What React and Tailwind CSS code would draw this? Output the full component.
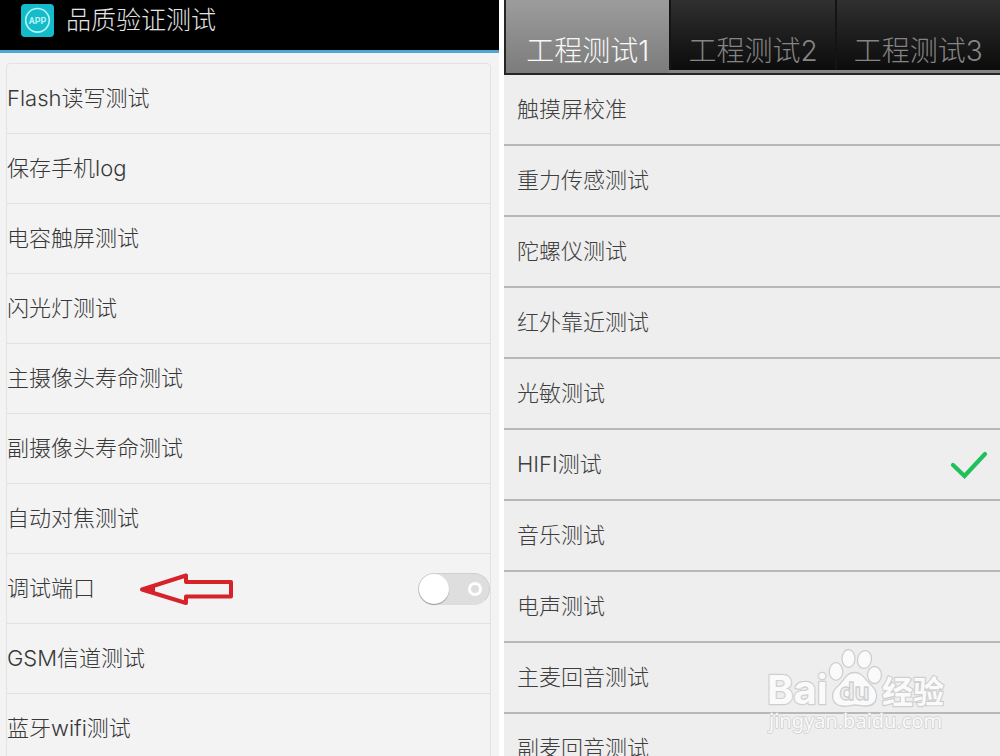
import React from 'react';

const QUALITY_TESTS = [
  'Flash读写测试',
  '保存手机log',
  '电容触屏测试',
  '闪光灯测试',
  '主摄像头寿命测试',
  '副摄像头寿命测试',
  '自动对焦测试',
  '调试端口',
  'GSM信道测试',
  '蓝牙wifi测试',
];

const TABS = ['工程测试1', '工程测试2', '工程测试3'];

const ENGINEERING_TESTS = [
  '触摸屏校准',
  '重力传感测试',
  '陀螺仪测试',
  '红外靠近测试',
  '光敏测试',
  'HIFI测试',
  '音乐测试',
  '电声测试',
  '主麦回音测试',
  '副麦回音测试',
];

function AppIcon() {
  return (
    <svg viewBox="0 0 33 33" className="size-[33px] shrink-0" aria-hidden="true">
      <rect width="33" height="33" rx="4" fill="#14bccb" />
      <circle cx="16.5" cy="16.3" r="11.8" fill="none" stroke="#b9f3f5" strokeWidth="1.6" />
      <text
        x="16.5"
        y="20"
        textAnchor="middle"
        fontSize="9"
        fontWeight="700"
        fill="#b9f3f5"
        className="font-['Roboto',sans-serif]"
      >
        APP
      </text>
    </svg>
  );
}

function Arrow() {
  return (
    <svg viewBox="0 0 96 34" className="ml-11 h-[34px] w-24 shrink-0" aria-hidden="true">
      <path
        d="M3 17.5 L47 3.5 V10 H92 V24.5 H47 V31 Z"
        fill="none"
        stroke="#d6232a"
        strokeWidth="4"
        strokeLinejoin="round"
      />
      <path d="M3 17.5 L16 13 V21.5 Z" fill="#d6232a" />
    </svg>
  );
}

function PortSwitch() {
  return (
    <span className="relative ml-auto h-8 w-[72px] shrink-0">
      <input
        id="debug-port"
        type="checkbox"
        role="switch"
        className="block h-8 w-[72px] cursor-pointer appearance-none rounded-full border border-[#d0d0d0] border-b-[#dddddd] bg-[#dedede]"
      />
      <span className="pointer-events-none absolute top-px left-px size-[30px] rounded-full bg-white shadow-[0_1px_1px_#999]" />
      <span className="pointer-events-none absolute top-[9px] right-2 size-[14px] rounded-full border-[3px] border-white" />
    </span>
  );
}

function Watermark() {
  return (
    <div className="pointer-events-none absolute right-[52px] bottom-[20px]">
      <svg viewBox="0 0 184 90" className="h-[90px] w-[184px]" aria-label="Baidu 经验">
        <g fill="#fafafa" stroke="#cfcfcf" strokeWidth="1.3" strokeLinejoin="round">
          <text x="3" y="58" fontSize="40" fontWeight="700" paintOrder="stroke" strokeWidth="2.4">
            Bai
          </text>
          <ellipse cx="72" cy="25.5" rx="6.8" ry="8.8" />
          <ellipse cx="84.500" cy="12.500" rx="6.500" ry="9" />
          <ellipse cx="100.500" cy="13.500" rx="7" ry="9" transform="rotate(10 100.500 13.500)" />
          <ellipse cx="110.500" cy="29" rx="7" ry="8.500" />
          <path d="M90.500 26.500 C99 26.500 101 34 107 39 C116 47 114 60 102 60 C97 60 94 59 90.500 59 C87 59 84 61 78 60 C67 59 66 47 73 41 C80 35 82 26.500 90.500 26.500 Z" />
          <text x="90.500" y="54" textAnchor="middle" fontSize="24" fontWeight="700" fill="#f0f0f0">
            du
          </text>
          <text
            x="118"
            y="57"
            fontSize="31"
            fontWeight="700"
            paintOrder="stroke"
            strokeWidth="2.4"
            className="font-['Noto_Sans_CJK_SC',sans-serif]"
          >
            经验
          </text>
          <text
            x="5"
            y="82"
            fontSize="20"
            fontWeight="400"
            paintOrder="stroke"
            strokeWidth="1.6"
            className="font-['Noto_Sans','Noto_Sans_CJK_SC',sans-serif]"
          >
            jingyan.baidu.com
          </text>
        </g>
      </svg>
    </div>
  );
}

function QualityPanel() {
  return (
    <section className="min-w-0 bg-[#f3f3f3]">
      <header className="h-[53px] border-b-[3px] border-[#49a8cf] bg-black pl-[21px]">
        <div className="flex h-10 items-center gap-3">
          <AppIcon />
          <h1 className="text-[25px] leading-10 font-light text-[#e4e4e4]">品质验证测试</h1>
        </div>
      </header>
      <ul className="mt-[10px] mr-2 ml-[6px] rounded-t-[4px] border border-[#e2e2e2]">
        {QUALITY_TESTS.map((name) => (
          <li key={name} className="flex h-[70px] items-center border-b border-[#e2e2e2] text-[22px] text-[#383838]">
            {name === '调试端口' ? (
              <>
                <label htmlFor="debug-port">{name}</label>
                <Arrow />
                <PortSwitch />
              </>
            ) : (
              <button type="button" className="h-full w-full text-left">
                {name}
              </button>
            )}
          </li>
        ))}
      </ul>
    </section>
  );
}

function EngineeringPanel() {
  return (
    <section className="relative min-w-0 bg-[#eeeeee]">
      <div role="tablist" className="grid h-[75px] grid-cols-3 border-b-2 border-[#262626] bg-[#858585]">
        {TABS.map((name, i) => (
          <button
            key={name}
            type="button"
            role="tab"
            aria-selected={i === 0}
            className={
              i === 0
                ? 'flex h-[73px] justify-center border-l-2 border-[#262626] bg-linear-to-b from-[#9c9c9c] to-[#7c7c7c] pt-7 text-[28px] leading-[46px] whitespace-nowrap text-[#f8f8f8]'
                : 'flex h-[70px] justify-center overflow-hidden border-l-2 border-[#141414] bg-linear-to-b from-[#303030] to-[#0c0c0c] pt-7 text-[28px] leading-[46px] whitespace-nowrap text-[#858585]'
            }
          >
            {name}
          </button>
        ))}
      </div>
      <ul>
        {ENGINEERING_TESTS.map((name) => (
          <li key={name} className="h-[71px] border-b-2 border-[#b8b8b8]">
            <button
              type="button"
              className="flex h-full w-full items-center justify-between pr-3 pl-[13px] text-left text-[22px] text-[#3e3e3e]"
            >
              {name}
              {name === 'HIFI测试' && (
                <svg viewBox="0 0 38 28" className="h-7 w-[38px]" aria-label="通过">
                  <path d="M3 14 L14.500 25 L35 3" fill="none" stroke="#1fc15b" strokeWidth="4.200" strokeLinecap="round" />
                </svg>
              )}
            </button>
          </li>
        ))}
      </ul>
    </section>
  );
}

export default function App() {
  return (
    <main className="relative grid h-screen grid-cols-[499fr_496fr] gap-[5px] overflow-hidden bg-white font-['Inter','Noto_Sans_CJK_SC',sans-serif] font-light">
      <QualityPanel />
      <EngineeringPanel />
      <Watermark />
    </main>
  );
}
